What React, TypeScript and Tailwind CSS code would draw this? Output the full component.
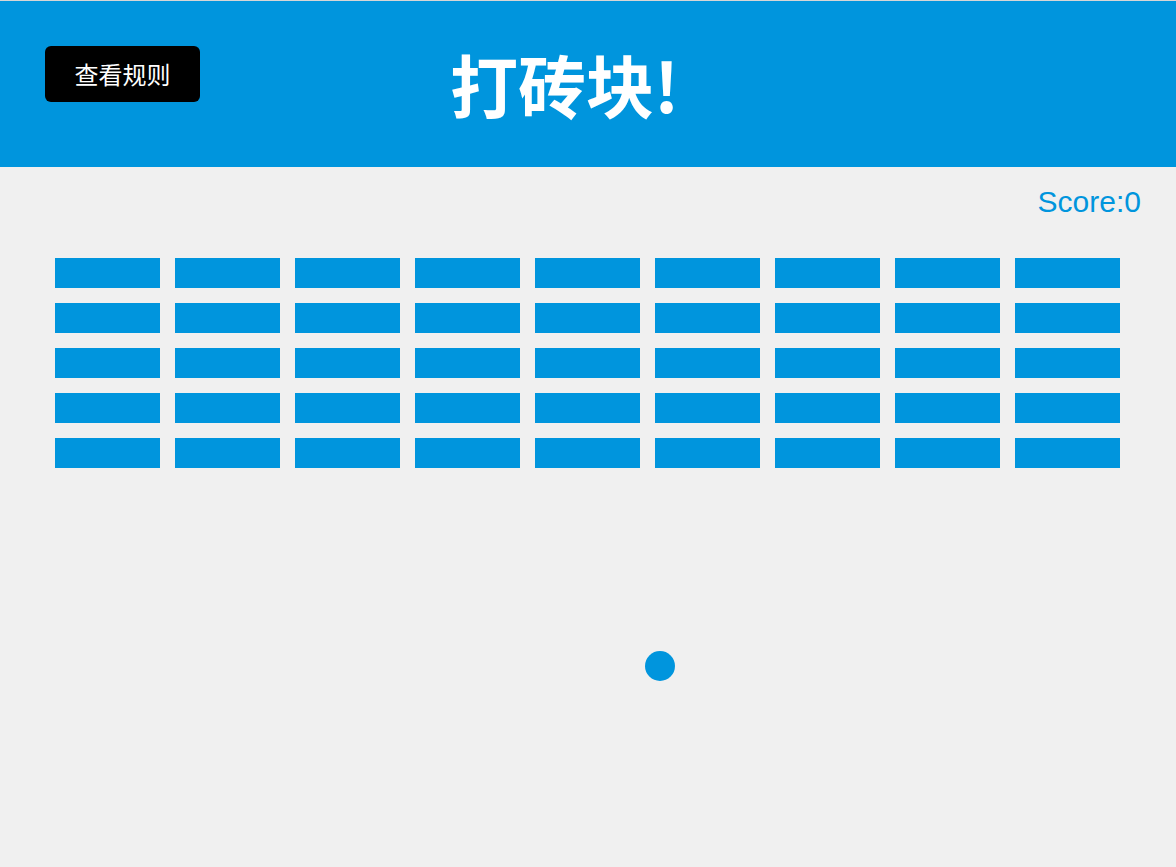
export default function App() {
  const rows = 5;
  const cols = 9;
  const bricks = Array.from({ length: rows * cols }, (_, i) => i);

  return (
    <div className="min-h-screen w-full bg-[#f0f0f0] font-['Noto_Sans_CJK_SC',sans-serif]">
      <header className="flex h-[167px] items-start border-t border-[#d6d6d6] bg-[#0095dd]">
        <button className="ml-[45px] mt-[45px] flex h-[56px] w-[155px] items-center justify-center rounded-md bg-black text-[24px] text-white">
          查看规则
        </button>
        <h1 className="ml-[250px] self-center text-[68px] font-bold leading-none text-white">
          打砖块!
        </h1>
      </header>

      <div className="flex justify-end pr-[35px] pt-[20px]">
        <span className="font-['Liberation_Sans',Arial,sans-serif] text-[30px] leading-[30px] text-[#0095dd]">
          Score:0
        </span>
      </div>

      {/* game board */}
      <div className="ml-[55px] mt-[41px] grid w-fit grid-cols-[repeat(9,105px)] gap-[15px]">
        {bricks.map((b) => (
          <div key={b} className="h-[30px] bg-[#0095dd]" />
        ))}
      </div>

      <div className="ml-[645px] mt-[183px] h-[30px] w-[30px] rounded-full bg-[#0095dd]" />
    </div>
  );
}
